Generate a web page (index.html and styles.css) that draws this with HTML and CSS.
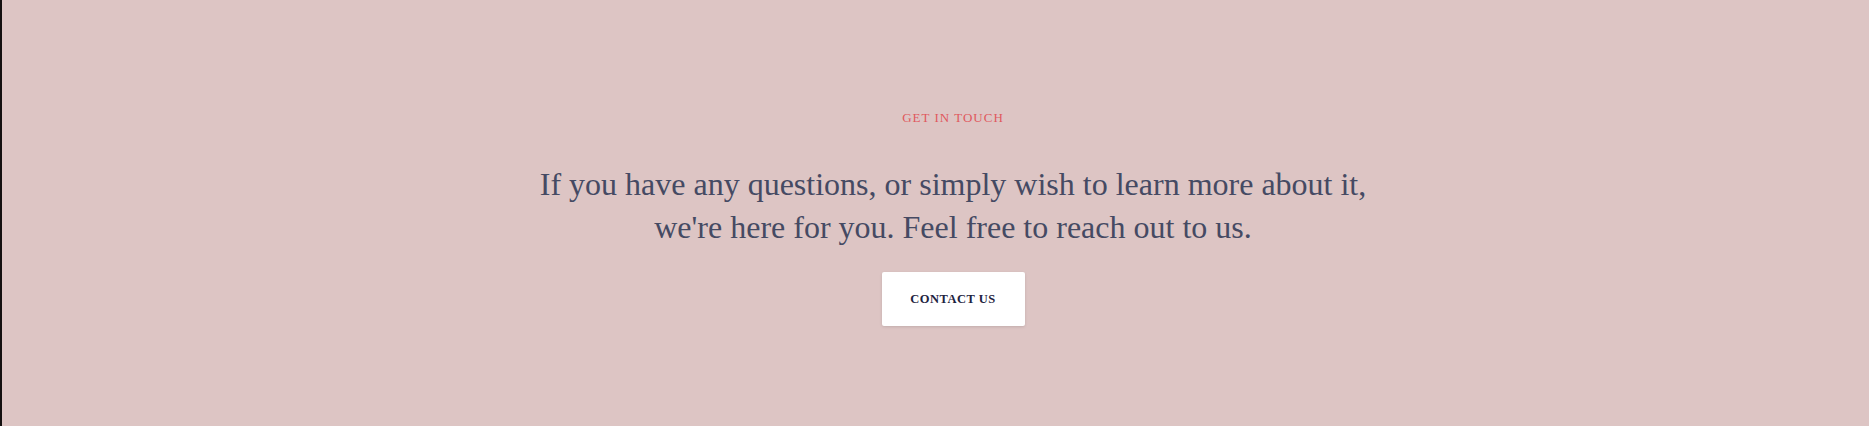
FILE: index.html
```html
<!DOCTYPE html>
<html lang="en">
<head>
<meta charset="utf-8">
<title>Get in touch</title>
<link rel="stylesheet" href="styles.css">
</head>
<body>
<section class="contact">
  <p class="eyebrow">GET IN TOUCH</p>
  <h2 class="lead">If you have any questions, or simply wish to learn more about it,<br>we're here for you. Feel free to reach out to us.</h2>
  <a class="btn" href="#">CONTACT US</a>
</section>
</body>
</html>
```
FILE: styles.css
```css
html, body {
  margin: 0;
  height: 100%;
}
body {
  background: #ddc5c4;
  border-left: 2px solid #141010;
  font-family: "Liberation Serif", "Times New Roman", serif;
  overflow: hidden;
}
.contact {
  display: flex;
  flex-direction: column;
  align-items: center;
  padding: 108px 0 0 35px;
  text-align: center;
}
.eyebrow {
  margin: 0;
  font-size: 13px;
  line-height: 20px;
  letter-spacing: 1px;
  color: #e0585d;
}
.lead {
  margin: 35px 0 0;
  font-weight: normal;
  font-size: 32px;
  line-height: 43px;
  color: #454a63;
}
.btn {
  margin-top: 23px;
  display: flex;
  align-items: center;
  justify-content: center;
  width: 143px;
  height: 54px;
  box-sizing: border-box;
  background: #ffffff;
  border-radius: 2px;
  box-shadow: 0 1px 3px rgba(0, 0, 0, 0.12);
  color: #1d2240;
  font-weight: bold;
  font-size: 12.5px;
  letter-spacing: 0.5px;
  text-decoration: none;
}
```
